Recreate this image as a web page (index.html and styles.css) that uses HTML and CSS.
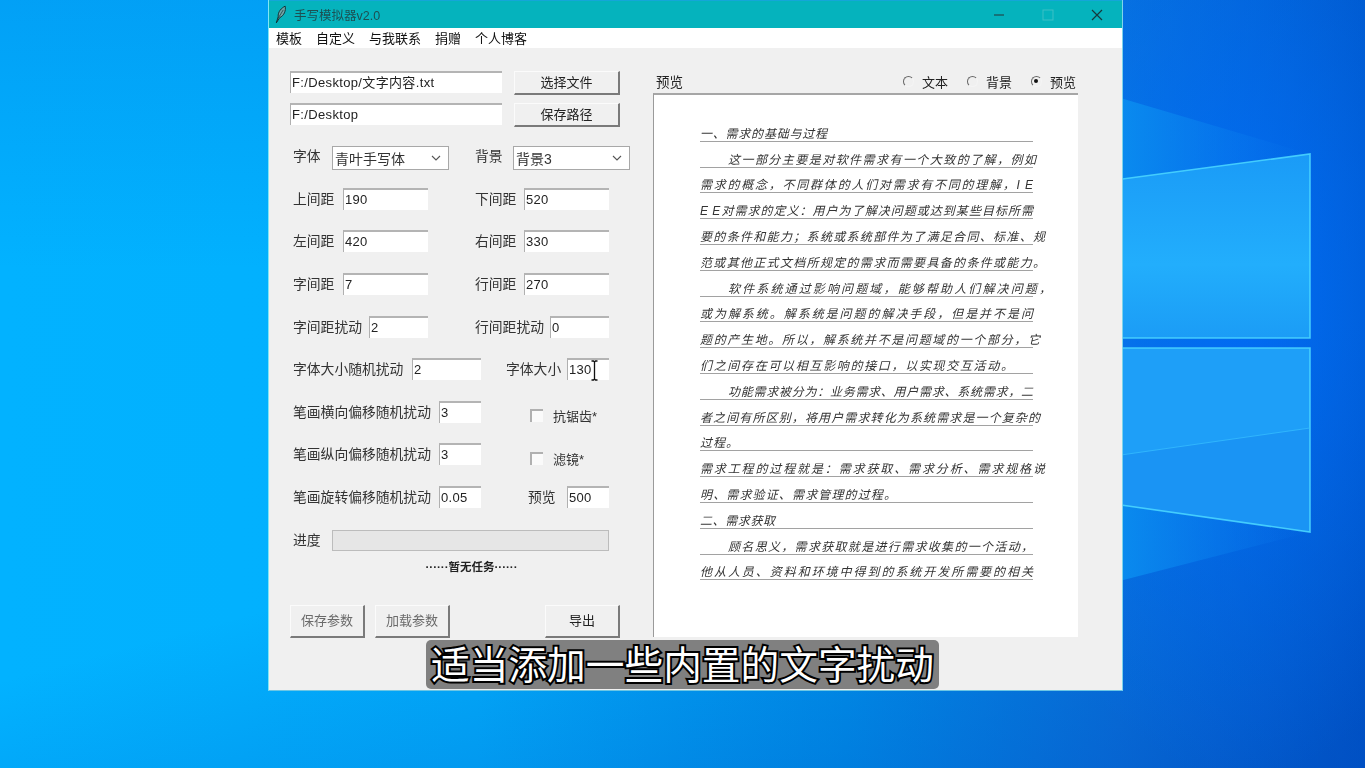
FILE: index.html
```html
<!DOCTYPE html>
<html lang="zh-CN">
<head>
<meta charset="utf-8">
<title>手写模拟器v2.0</title>
<link rel="stylesheet" href="styles.css">
</head>
<body>
<svg class="wallpaper" viewBox="0 0 1365 768" aria-hidden="true">
  <defs>
    <linearGradient id="pane" x1="0" y1="0" x2="0" y2="1">
      <stop offset="0" stop-color="#1a9bf7"/>
      <stop offset="0.6" stop-color="#22aefc"/>
      <stop offset="1" stop-color="#1b9cf6"/>
    </linearGradient>
    <linearGradient id="wedge" x1="0" y1="0" x2="1" y2="0">
      <stop offset="0" stop-color="#0a90f0"/>
      <stop offset="1" stop-color="#0a78ee" stop-opacity="0"/>
    </linearGradient>
  </defs>
  <polygon points="1100,92 1310,154 1100,182" fill="url(#wedge)"/>
  <polygon points="1100,502 1310,532 1100,586" fill="url(#wedge)"/>
  <polygon points="1100,182 1310,154 1310,338 1100,338" fill="url(#pane)"/>
  <polygon points="1100,348 1310,348 1310,532 1100,502" fill="#1e9ff8"/>
  <polygon points="1100,458 1310,428 1310,532 1100,502" fill="#1a94f4" />
  <path d="M1100 182 L1310 154 L1310 338 L1100 338" fill="none" stroke="#4cd8ff" stroke-width="1.6" opacity=".85"/>
  <path d="M1100 348 L1310 348 L1310 532 L1100 502" fill="none" stroke="#4cd8ff" stroke-width="1.6" opacity=".85"/>
  <path d="M1100 458 L1310 428" stroke="#38c0ff" stroke-width="1" opacity=".7"/>
</svg>

<main class="window">
  <header class="titlebar">
    <svg class="feather" viewBox="0 0 14 20" aria-hidden="true">
      <path d="M2.5 19 L4.5 12.5 C4 7 8 3 12 1 C13 6 11 11 6 13.5 L2.5 19Z" fill="#6fa5a8" stroke="#0f2a2e" stroke-width="1"/>
      <path d="M4.5 14 L10 5" stroke="#10292c" stroke-width=".7"/>
    </svg>
    <span class="title">手写模拟器v2.0</span>
    <div class="winctl">
      <svg class="ctl" viewBox="0 0 12 12" aria-hidden="true"><path d="M1 6 H11" stroke="#20484c" stroke-width="1.2"/></svg>
      <svg class="ctl" viewBox="0 0 12 12" aria-hidden="true"><rect x="1" y="1" width="10" height="10" fill="none" stroke="#3cc0c6" stroke-width="1"/></svg>
      <svg class="ctl" viewBox="0 0 12 12" aria-hidden="true"><path d="M1 1 L11 11 M11 1 L1 11" stroke="#17393c" stroke-width="1.2"/></svg>
    </div>
  </header>

  <nav class="menubar">
    <span>模板</span><span>自定义</span><span>与我联系</span><span>捐赠</span><span>个人博客</span>
  </nav>

  <div class="content">
    <section class="left">
      <div class="path-row">
        <div class="field path">F:/Desktop/文字内容.txt</div>
        <div class="btn btn-path">选择文件</div>
      </div>
      <div class="path-row">
        <div class="field path">F:/Desktop</div>
        <div class="btn btn-path">保存路径</div>
      </div>

      <div class="rows">
        <div class="row row-std">
          <div class="cell cell-sel"><span class="lbl">字体</span><div class="select"><span>青叶手写体</span><svg class="chev" viewBox="0 0 10 6" aria-hidden="true"><path d="M1 1 L5 5 L9 1" fill="none" stroke="#555" stroke-width="1.1"/></svg></div></div>
          <div class="cell cell-sel"><span class="lbl">背景</span><div class="select"><span>背景3</span><svg class="chev" viewBox="0 0 10 6" aria-hidden="true"><path d="M1 1 L5 5 L9 1" fill="none" stroke="#555" stroke-width="1.1"/></svg></div></div>
        </div>
        <div class="row row-std">
          <div class="cell"><span class="lbl">上间距</span><div class="field f85">190</div></div>
          <div class="cell"><span class="lbl">下间距</span><div class="field f85">520</div></div>
        </div>
        <div class="row row-std">
          <div class="cell"><span class="lbl">左间距</span><div class="field f85">420</div></div>
          <div class="cell"><span class="lbl">右间距</span><div class="field f85">330</div></div>
        </div>
        <div class="row row-std">
          <div class="cell"><span class="lbl">字间距</span><div class="field f85">7</div></div>
          <div class="cell"><span class="lbl">行间距</span><div class="field f85">270</div></div>
        </div>
        <div class="row row-std">
          <div class="cell"><span class="lbl">字间距扰动</span><div class="field f59">2</div></div>
          <div class="cell"><span class="lbl">行间距扰动</span><div class="field f59">0</div></div>
        </div>
        <div class="row row-size">
          <div class="cell"><span class="lbl">字体大小随机扰动</span><div class="field f69">2</div></div>
          <div class="cell"><span class="lbl">字体大小</span><div class="field f42 has-cursor">130<svg class="ibeam" viewBox="0 0 7 21" aria-hidden="true"><path d="M.5 1 H2.5 L3.5 2 L4.5 1 H6.5 M3.5 2 V19 M.5 20 H2.5 L3.5 19 L4.5 20 H6.5" fill="none" stroke="#111" stroke-width="1.3"/></svg></div></div>
        </div>
        <div class="row row-stroke">
          <div class="cell"><span class="lbl">笔画横向偏移随机扰动</span><div class="field f42">3</div></div>
          <div class="check"><i class="box"></i><span>抗锯齿*</span></div>
        </div>
        <div class="row row-stroke">
          <div class="cell"><span class="lbl">笔画纵向偏移随机扰动</span><div class="field f42">3</div></div>
          <div class="check"><i class="box"></i><span>滤镜*</span></div>
        </div>
        <div class="row row-stroke">
          <div class="cell"><span class="lbl">笔画旋转偏移随机扰动</span><div class="field f42">0.05</div></div>
          <div class="cell"><span class="lbl">预览</span><div class="field f42">500</div></div>
        </div>
        <div class="row row-progress">
          <span class="lbl">进度</span><div class="progress"></div>
        </div>
      </div>

      <p class="status">······暂无任务······</p>

      <div class="actions">
        <div class="btn btn-act muted">保存参数</div>
        <div class="btn btn-act muted">加载参数</div>
        <div class="btn btn-act export">导出</div>
      </div>
    </section>

    <section class="right">
      <div class="right-head">
        <span class="preview-label">预览</span>
        <div class="radios">
          <div class="radio"><i class="dot"></i><span>文本</span></div>
          <div class="radio"><i class="dot"></i><span>背景</span></div>
          <div class="radio"><i class="dot on"></i><span>预览</span></div>
        </div>
      </div>
      <div class="sheet">
        <div class="line"><span class="hw e127">一、需求的基础与过程</span></div>
        <div class="line"><span class="hw e336 ind">这一部分主要是对软件需求有一个大致的了解，例如</span></div>
        <div class="line"><span class="hw e333">需求的概念，不同群体的人们对需求有不同的理解，I E</span></div>
        <div class="line"><span class="hw e333">E E对需求的定义：用户为了解决问题或达到某些目标所需</span></div>
        <div class="line"><span class="hw e345">要的条件和能力；系统或系统部件为了满足合同、标准、规</span></div>
        <div class="line"><span class="hw e345">范或其他正式文档所规定的需求而需要具备的条件或能力。</span></div>
        <div class="line"><span class="hw e351 ind">软件系统通过影响问题域，能够帮助人们解决问题，</span></div>
        <div class="line"><span class="hw e333">或为解系统。解系统是问题的解决手段，但是并不是问</span></div>
        <div class="line"><span class="hw e340">题的产生地。所以，解系统并不是问题域的一个部分，它</span></div>
        <div class="line"><span class="hw e313">们之间存在可以相互影响的接口，以实现交互活动。</span></div>
        <div class="line"><span class="hw e333 ind">功能需求被分为：业务需求、用户需求、系统需求，二</span></div>
        <div class="line"><span class="hw e340">者之间有所区别，将用户需求转化为系统需求是一个复杂的</span></div>
        <div class="line"><span class="hw e34">过程。</span></div>
        <div class="line"><span class="hw e345">需求工程的过程就是：需求获取、需求分析、需求规格说</span></div>
        <div class="line"><span class="hw e196">明、需求验证、需求管理的过程。</span></div>
        <div class="line"><span class="hw e75">二、需求获取</span></div>
        <div class="line"><span class="hw e333 ind">顾名思义，需求获取就是进行需求收集的一个活动，</span></div>
        <div class="line"><span class="hw e333">他从人员、资料和环境中得到的系统开发所需要的相关</span></div>
      </div>
    </section>
  </div>
</main>

<div class="subtitle">适当添加一些内置的文字扰动</div>
</body>
</html>
```

FILE: styles.css
```css
* { box-sizing: border-box; }

html, body { height: 100%; }

body {
  margin: 0;
  overflow: hidden;
  position: relative;
  font-family: "Liberation Sans", "Noto Sans CJK SC", sans-serif;
  font-size: 14px;
  color: #1c1c1c;
  background:
    radial-gradient(ellipse 260px 480px at 1240px 300px, rgba(0, 108, 250, .85), rgba(0, 108, 250, 0) 100%),
    linear-gradient(165deg, rgba(0, 70, 190, 0) 60%, rgba(0, 70, 190, .45) 100%),
    linear-gradient(180deg, rgba(0, 90, 210, .2) 0%, rgba(0, 90, 210, 0) 35%),
    linear-gradient(90deg, #02b2ff 0%, #02b0fd 35%, #0098ee 62%, #0a78de 82%, #0058c8 100%);
}

.wallpaper {
  position: absolute;
  inset: 0;
  width: 1365px;
  height: 768px;
}

/* window */
.window {
  position: absolute;
  left: 268px;
  top: 0;
  width: 855px;
  height: 691px;
  display: flex;
  flex-direction: column;
  background: #f0f0f0;
  border-left: 1px solid #7fe6f5;
  border-right: 1px solid #7fd4ea;
  border-bottom: 1px solid #6cc6e4;
  filter: blur(.35px);
}

.titlebar {
  height: 28px;
  flex: none;
  display: flex;
  align-items: center;
  background: #05b3bd;
  border-top: 1px solid #14a6d8;
  padding-left: 5px;
}

.feather { width: 13px; height: 19px; flex: none; }

.title {
  margin-left: 7px;
  font-size: 12.5px;
  color: #1d4f52;
}

.winctl {
  margin-left: auto;
  margin-right: 19px;
  display: flex;
  gap: 37px;
  align-items: center;
}

.ctl { width: 12px; height: 12px; display: block; }

.menubar {
  height: 20px;
  flex: none;
  display: flex;
  align-items: center;
  gap: 14px;
  padding: 0 0 2px 7px;
  background: #fff;
  font-size: 13px;
  color: #111;
}

.content { flex: 1; display: flex; min-height: 0; }

/* left form */
.left {
  width: 384px;
  flex: none;
  padding: 23px 0 0 21px;
}

.path-row {
  display: flex;
  gap: 12px;
  margin-bottom: 8px;
  width: 330px;
}

.field {
  height: 22px;
  padding-left: 1px;
  line-height: 19px;
  background: #fff;
  border-top: 2px solid #b4b4b4;
  border-left: 1px solid #b0b0b0;
  font-size: 13px;
  letter-spacing: .3px;
  color: #222;
  white-space: nowrap;
}

.path { width: 212px; letter-spacing: .35px; }

.btn {
  display: flex;
  align-items: center;
  justify-content: center;
  padding-bottom: 2px;
  background: #f0f0f0;
  border-top: 1px solid #fbfbfb;
  border-left: 1px solid #fbfbfb;
  border-right: 2px solid #7a7a7a;
  border-bottom: 2px solid #7a7a7a;
  font-size: 13px;
  color: #222;
}

.btn-path { width: 106px; height: 24px; }

.rows { margin: 0 0 0 3px; }

.row {
  height: 42.6px;
  display: grid;
  align-items: center;
  font-size: 13.8px;
  color: #333;
}

.lbl { margin-bottom: 2px; }

.row-std { grid-template-columns: 182px 134px; }
.row-size { grid-template-columns: 213px 103px; }
.row-stroke { grid-template-columns: 235px 81px; }
.row-progress { grid-template-columns: 39px 277px; }

.cell { display: flex; align-items: center; justify-content: space-between; }

.row-std .cell { width: 135px; }
.row-std .cell + .cell { width: 134px; }
.row-std .cell-sel { width: 156px; }
.row-std .cell-sel + .cell-sel { width: 155px; }
.row-size .cell:first-child, .row-stroke .cell:first-child { width: 188px; }

.f85 { width: 85px; }
.f69 { width: 69px; }
.f59 { width: 59px; }
.f42 { width: 42px; }

.select {
  width: 117px;
  height: 24px;
  margin-top: 4px;
  display: flex;
  align-items: center;
  justify-content: space-between;
  padding: 0 7px 0 2px;
  background: #fff;
  border: 1.5px solid #a8a8a8;
  font-size: 14px;
  color: #333;
}

.chev { width: 10px; height: 6px; flex: none; }

.has-cursor { position: relative; }

.ibeam {
  position: absolute;
  left: 23px;
  top: 0;
  width: 7px;
  height: 21px;
}

.check {
  display: flex;
  align-items: center;
  gap: 10px;
  margin: 8px 0 0 2px;
  font-size: 13px;
}

.box {
  width: 13px;
  height: 13px;
  flex: none;
  background: #fafafa;
  border-top: 2px solid #b0b0b0;
  border-left: 2px solid #b0b0b0;
}

.progress {
  height: 21px;
  margin-top: 2px;
  background: #e6e6e6;
  border: 1px solid #bcbcbc;
}

.status {
  width: 363px;
  margin: -1px 0 0;
  text-align: center;
  font-size: 11.5px;
  line-height: 14px;
  font-weight: 700;
  color: #222;
}

.actions {
  display: flex;
  margin-top: 31px;
  width: 330px;
}

.btn-act { width: 75px; height: 33px; }
.btn-act + .btn-act { margin-left: 10px; }
.muted { color: #6a6a6a; }
.btn-act.export { margin-left: auto; }

/* right preview */
.right { width: 425px; flex: none; display: flex; flex-direction: column; }

.right-head {
  height: 45px;
  flex: none;
  display: flex;
  align-items: center;
  justify-content: space-between;
  padding: 22px 2px 0 3px;
  font-size: 13.5px;
  color: #222;
}

.preview-label { margin-top: -2px; }

.radios { display: flex; gap: 19px; }

.radio { display: flex; align-items: center; gap: 8px; font-size: 13px; }

.dot {
  width: 11px;
  height: 11px;
  flex: none;
  border-radius: 50%;
  border: 1px solid;
  border-color: #666 #f4f4f4 #f4f4f4 #666;
  position: relative;
  margin-top: -1px;
}

.dot.on::after {
  content: "";
  position: absolute;
  left: 2.5px;
  top: 2.5px;
  width: 4px;
  height: 4px;
  border-radius: 50%;
  background: #111;
}

.sheet {
  width: 425px;
  height: 544px;
  flex: none;
  padding: 21px 0 0 46px;
  background: #fff;
  border-top: 2px solid #a6a6a6;
  border-left: 1.5px solid #9a9a9a;
}

.line {
  width: 333px;
  height: 25.8px;
  display: flex;
  align-items: flex-end;
  border-bottom: 1px solid #a2a2a2;
}

.hw {
  display: block;
  flex: none;
  height: 20px;
  line-height: 20px;
  margin-bottom: -3px;
  font-size: 12px;
  font-style: italic;
  color: #333;
  white-space: normal;
  text-align: justify;
  text-align-last: justify;
  text-justify: inter-character;
}

.ind { padding-left: 28px; }

.e34 { width: 38px; }
.e75 { width: 75px; }
.e127 { width: 127px; }
.e196 { width: 196px; }
.e313 { width: 313px; }
.e333 { width: 333px; }
.e336 { width: 336px; }
.e340 { width: 340px; }
.e345 { width: 345px; }
.e351 { width: 351px; }

/* subtitle over the window */
.subtitle {
  position: absolute;
  left: 426px;
  top: 640px;
  width: 513px;
  height: 49px;
  display: flex;
  align-items: center;
  justify-content: center;
  padding-bottom: 5px;
  background: #808080;
  border-radius: 5px;
  font-family: "Noto Sans CJK SC", sans-serif;
  font-size: 38.7px;
  color: #fff;
  -webkit-text-stroke: 4px #000;
  paint-order: stroke fill;
  white-space: nowrap;
}
```
